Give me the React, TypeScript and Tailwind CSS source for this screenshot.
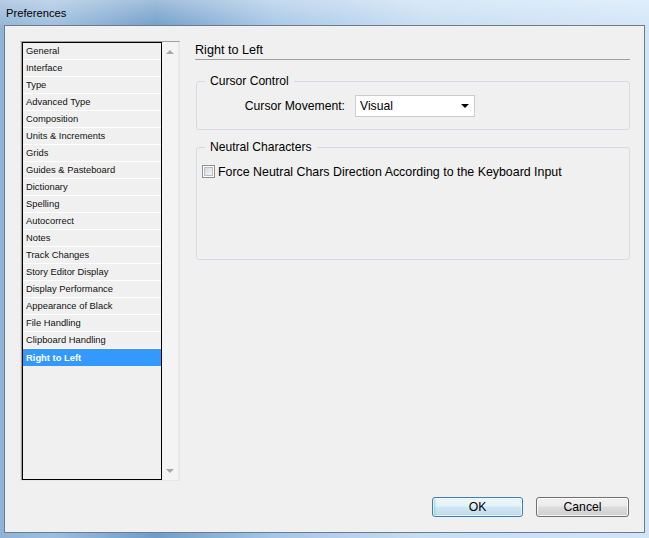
import React from "react";

const items = [
  "General",
  "Interface",
  "Type",
  "Advanced Type",
  "Composition",
  "Units & Increments",
  "Grids",
  "Guides & Pasteboard",
  "Dictionary",
  "Spelling",
  "Autocorrect",
  "Notes",
  "Track Changes",
  "Story Editor Display",
  "Display Performance",
  "Appearance of Black",
  "File Handling",
  "Clipboard Handling",
  "Right to Left",
];

export default function App() {
  return (
    <div
      className="w-[649px] h-[538px] overflow-hidden flex flex-col bg-[linear-gradient(to_right,#8fb3d6_0%,#9dbede_8%,#6f9cc8_24%,#a6c6e6_42%,#c6ddf3_65%,#d2e5f7_100%)] text-black"
      style={{ fontFamily: '"Liberation Sans", Arial, sans-serif' }}
    >
      {/* Title bar */}
      <div className="h-[25px] shrink-0 flex items-center pl-[6px] bg-[linear-gradient(to_bottom,rgba(255,255,255,0.35),rgba(255,255,255,0.05))]">
        <span className="text-[11.2px] leading-[14px] text-black">Preferences</span>
      </div>

      {/* Client area */}
      <div className="ml-[4px] w-[641px] h-[508px] shrink-0 bg-[#f0f0f0] border border-[#6b7c8d] flex flex-col">
        <div className="flex pt-[15px] pl-[15px]">
          {/* List frame */}
          <div className="w-[160px] h-[440px] flex pl-[1px] shadow-[inset_1px_0_0_#a0a0a0] border-t border-t-[#a0a0a0] border-l border-l-[#e3e3e3] border-r border-b border-r-[#e6e6e6] border-b-[#e6e6e6]">
            <div className="w-[140px] h-full border border-black bg-[#f0f0f0] flex flex-col">
              {items.map((it) => {
                const sel = it === "Right to Left";
                return (
                  <div
                    key={it}
                    className={
                      sel
                        ? "h-[17px] shrink-0 flex items-center pl-[3px] bg-[#3399ff] text-white font-bold text-[9.4px] leading-[17px]"
                        : "h-[17px] shrink-0 flex items-center pl-[3px] border-b border-white text-[9.4px] leading-[16px] text-[#101010]"
                    }
                  >
                    {it}
                  </div>
                );
              })}
            </div>
            {/* Scrollbar */}
            <div className="flex-1 h-full bg-[#f4f4f4] border-r border-[#e9e9e9] flex flex-col items-center justify-between pt-[8px] pb-[7px]">
              <svg width="8" height="4" viewBox="0 0 8 4">
                <path d="M0 4 L4 0 L8 4 Z" fill="#a8a8a8" />
              </svg>
              <svg width="8" height="4" viewBox="0 0 8 4">
                <path d="M0 0 L8 0 L4 4 Z" fill="#a8a8a8" />
              </svg>
            </div>
          </div>

          {/* Right panel */}
          <div className="ml-[15px] w-[435px] mt-[1px] flex flex-col">
            <div className="h-[18px] border-b border-[#a0a0a0] flex items-center text-[12.6px] leading-[17px]">
              Right to Left
            </div>

            {/* Cursor Control group */}
            <div className="relative mt-[21px] ml-[1px] w-[434px] h-[49px] border border-[#d5dbe0] rounded-[3px] pt-[13px]">
              <span className="absolute left-[8px] top-[-9px] px-[5px] bg-[#f0f0f0] text-[12.1px] leading-[16px]">
                Cursor Control
              </span>
              <div className="flex items-center h-[22px]">
                <div className="w-[148px] text-right text-[12.2px] leading-[16px]">Cursor Movement:</div>
                <div className="ml-[10px] w-[120px] h-[22px] bg-white border border-[#cdcdcd] flex items-center pl-[4px] pr-[5px] text-[12.2px] leading-[16px]">
                  <span className="flex-1">Visual</span>
                  <svg width="8" height="4" viewBox="0 0 8 4">
                    <path d="M0 0 L8 0 L4 4 Z" fill="#000" />
                  </svg>
                </div>
              </div>
            </div>

            {/* Neutral Characters group */}
            <div className="relative mt-[17px] ml-[1px] w-[434px] h-[113px] border border-[#d5dbe0] rounded-[3px] pt-[17px] pl-[5px]">
              <span className="absolute left-[8px] top-[-9px] px-[5px] bg-[#f0f0f0] text-[12.1px] leading-[16px]">
                Neutral Characters
              </span>
              <div className="flex items-center h-[13px]">
                <div className="w-[13px] h-[13px] border border-[#8e8f8f] bg-white p-[1px]">
                  <div className="w-full h-full border border-[#b9bdc2] bg-[linear-gradient(135deg,#d4d7db,#f6f6f6)]" />
                </div>
                <span className="ml-[3px] text-[12.4px] leading-[16px]">
                  Force Neutral Chars Direction According to the Keyboard Input
                </span>
              </div>
            </div>
          </div>
        </div>

        {/* Buttons */}
        <div className="flex justify-end pr-[15px] mt-[16px] gap-[13px]">
          <button className="w-[91px] h-[20px] rounded-[3px] border border-[#3c7fb1] bg-[linear-gradient(to_bottom,#eef7fc_0%,#e2f1fa_45%,#cfe6f4_50%,#bfdcee_100%)] shadow-[inset_0_0_0_1px_rgba(255,255,255,0.7),inset_2px_0_2px_rgba(80,200,230,0.5)] text-[12.2px] leading-[16px] text-black flex items-center justify-center">
            OK
          </button>
          <button className="w-[93px] h-[20px] rounded-[3px] border border-[#707070] bg-[linear-gradient(to_bottom,#f2f2f2_0%,#ebebeb_45%,#dddddd_50%,#cfcfcf_100%)] shadow-[inset_0_0_0_1px_rgba(255,255,255,0.8)] text-[12.2px] leading-[16px] text-black flex items-center justify-center">
            Cancel
          </button>
        </div>
      </div>
    </div>
  );
}
